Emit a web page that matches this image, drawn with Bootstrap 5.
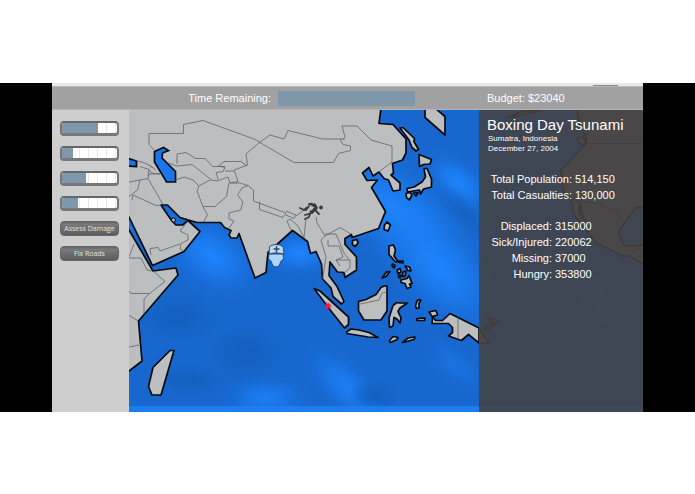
<!DOCTYPE html>
<html lang="en">
<head>
<meta charset="utf-8">
<meta name="viewport" content="width=device-width, initial-scale=1">
<title>Boxing Day Tsunami</title>
<link href="https://cdn.jsdelivr.net/npm/bootstrap@5.3.0/dist/css/bootstrap.min.css" rel="stylesheet">
<style>
body{font-family:"Liberation Sans",Arial,sans-serif;font-size:11px;line-height:16px;padding-top:83px;background:#fff}
.game{max-width:591px;background:#cecece}
.edge{height:4px;background:#e9e8e4;border-bottom:1px solid #bbb}
.topbar{background:#a1a1a1;height:23px;color:#fff;font-size:11px;border-bottom:1px solid #b4b4b4}
.time-label{padding-right:7px}
.time-cell{width:201px}
.time-track{width:137px;height:15px;background:#7e97aa;border-radius:0}
.info-col{width:164px;padding-left:8px}
.tools{width:77px;padding:11px 10px 0 8px;gap:10px}
.meter{height:15px;border:2px solid #777;border-top-color:#666;border-bottom-width:3px;border-radius:4px;background:#fff repeating-linear-gradient(90deg,transparent 0 8px,#e6e6e6 8px 9px)}
.meter .progress-bar{background:#7e97aa}
.tool{height:15px;line-height:13px;font-family:"Open Sans",sans-serif;font-size:7px;color:#e4e4e4;background:linear-gradient(#666,#7a7a7a 20%,#5c5c5c);border:1px solid #656565;border-radius:4px;white-space:nowrap}
.tool:hover{color:#fff;background:#555}
.stage{background:#1767ce}
.stage > *{grid-area:1/1}
.panel{background:rgba(69,66,64,.87);color:#fff;padding-top:5px}
.panel h1{font-size:15px;line-height:19px}
.place{font-size:8px;line-height:10px;padding-left:1px}
.totals,.needs{display:grid;column-gap:3px}
.totals{grid-template-columns:85px auto;margin-top:17px}
.needs{grid-template-columns:65px auto;margin-top:15px}
dl dt{font-weight:400;text-align:right;white-space:nowrap}
</style>
<script src="https://cdn.jsdelivr.net/npm/bootstrap@5.3.0/dist/js/bootstrap.bundle.min.js"></script>
</head>
<body>
<div class="bg-black">
<main class="game mx-auto">
  <div class="edge text-end pe-4 lh-1"><svg class="d-block ms-auto" width="27" height="3" viewBox="0 0 27 3" aria-hidden="true"><path d="M1 2.500H26" stroke="#8a8a88" stroke-width="1"/></svg></div>
  <header class="topbar d-flex align-items-center">
    <div class="d-flex align-items-center flex-grow-1">
      <span class="time-label flex-grow-1 text-end" id="time">Time Remaining:</span>
      <div class="time-cell"><div class="progress time-track" role="progressbar" aria-labelledby="time" aria-valuenow="100" aria-valuemin="0" aria-valuemax="100"></div></div>
    </div>
    <div class="info-col flex-shrink-0">Budget: $23040</div>
  </header>
  <div class="d-flex">
    <aside class="tools d-flex flex-column flex-shrink-0">
      <div class="progress meter" role="progressbar" aria-label="Food" aria-valuenow="65" aria-valuemin="0" aria-valuemax="100"><div class="progress-bar" style="width:65%"></div></div>
      <div class="progress meter" role="progressbar" aria-label="Water" aria-valuenow="20" aria-valuemin="0" aria-valuemax="100"><div class="progress-bar" style="width:20%"></div></div>
      <div class="progress meter" role="progressbar" aria-label="Medicine" aria-valuenow="44" aria-valuemin="0" aria-valuemax="100"><div class="progress-bar" style="width:44%"></div></div>
      <div class="progress meter" role="progressbar" aria-label="Shelter" aria-valuenow="29" aria-valuemin="0" aria-valuemax="100"><div class="progress-bar" style="width:29%"></div></div>
      <button type="button" class="btn tool p-0">Assess Damage</button>
      <button type="button" class="btn tool p-0">Fix Roads</button>
    </aside>
    <div class="stage d-grid flex-grow-1">
      <svg class="w-100 d-block" viewBox="129 110 514 302" role="img" aria-label="Map of Asia and the Indian Ocean">
        <defs>
          <radialGradient id="glow"><stop offset="0" stop-color="#1d84ff"/><stop offset=".35" stop-color="#1d82fb" stop-opacity=".7"/><stop offset=".7" stop-color="#1d80f8" stop-opacity=".2"/><stop offset="1" stop-color="#1d80f8" stop-opacity="0"/></radialGradient>
          <radialGradient id="deep"><stop offset="0" stop-color="#145fbe"/><stop offset="1" stop-color="#145fbe" stop-opacity="0"/></radialGradient>
        </defs>
        <rect x="129" y="110" width="514" height="302" fill="#1767ce"/>
        <g fill="url(#glow)">
          <ellipse cx="212" cy="256" rx="56" ry="38" transform="rotate(35 212 256)"/>
          <ellipse cx="395" cy="210" rx="95" ry="52" transform="rotate(35 395 210)"/>
          <ellipse cx="440" cy="268" rx="90" ry="48" transform="rotate(48 440 268)"/>
          <ellipse cx="458" cy="182" rx="44" ry="24" transform="rotate(40 458 182)"/>
          <ellipse cx="300" cy="253" rx="42" ry="24"/>
          <ellipse cx="266" cy="398" rx="46" ry="24" opacity=".8"/>
          <ellipse cx="345" cy="386" rx="56" ry="26" opacity=".8" transform="rotate(45 345 386)"/>
          <ellipse cx="148" cy="222" rx="34" ry="20"/>
          <ellipse cx="455" cy="365" rx="40" ry="20" opacity=".4" transform="rotate(40 455 365)"/>
          <ellipse cx="600" cy="300" rx="60" ry="24" opacity=".5" transform="rotate(45 600 300)"/>
        </g>
        <g fill="url(#deep)">
          <ellipse cx="178" cy="318" rx="45" ry="26"/><ellipse cx="190" cy="380" rx="40" ry="16"/>
          <ellipse cx="247" cy="352" rx="40" ry="30"/><ellipse cx="375" cy="395" rx="26" ry="16"/>
          <ellipse cx="462" cy="212" rx="36" ry="14" opacity=".7" transform="rotate(48 462 212)"/>
        </g>
        <rect x="129" y="406" width="514" height="6" fill="#1d84fb" opacity=".75"/>
        <g fill="#bcbec0" stroke="#050a10" stroke-width="1.7" stroke-linejoin="round">
          <path d="M127 108H381L379 123.500 393 124.500 406 139V153L402.500 160 392.500 163.500 393.500 173 391 175 400 183V190L393 191 388.500 180 384 178.500 379 172 373 176 369 167.500 362.500 173 367 180.500 377.500 180 371.500 187.500 385.500 211.500 378.500 228.500 352 237.500 351.500 234.500 345 238.500V244.500L356.500 257V270L345 277.500 344 272.500 337.500 272 330 262 329 275.500 337 286.500 344 301.500 341.500 304 333 296.500 331 288 322.500 279 321.500 264 316 251.500 310.500 253.500 307.500 241.500 292.500 230.500 268 252.500 266 272.500 255 278 239 233.500 237 238H231L229 235 231 230.500 224.500 227.500 220.500 222.500H197L180 217.500 167.500 205H161L166 212.500 172 221 176 225H182.500L188 220.500 200 231.500 184 251.500 152.500 265.500 129 217 125 216V228L129 230 153 271 176 268 178 275 138.500 321 142 361 126 373.500H120V108Z"/>
          <path d="M170 350.500H174L161 395H152L148.500 386.500 153 367.500Z"/>
          <path d="M314 288.500 320 291 348.500 317V324.500L344.500 328 331 311Z"/>
          <path d="M346.500 332 351 329 359 330 369 332.500 378 337.500 368 337 347 333.500Z"/>
          <path d="M384 286H387V311L381 320H364L358.500 311V301.500L366 299.500 376 294.500 381 287.500Z"/>
          <path d="M399 303H407.500L400 308 398 311.500 401 318 400 323 397 319 394 317.500 393 326 389.500 327.500 389 318 393 305.500 397 302.500Z"/>
          <path d="M417 301 419 299.500 421 300.500 419 303V308L416.500 308.500 415.500 306Z"/>
          <path d="M417 318.500 425 318 424.500 320.500H417Z"/>
          <path d="M429 312 436 310.500 437.500 315 432.500 316.500 435.500 320.500H442.500L450 313.500 479 328V343L468.500 334.500 461.500 340.500 448.500 336 452.500 332.500V327.500L448.500 323.500H432L432.500 317Z"/>
          <path d="M389.500 340.500 393 336.500 398 337.500 397 339.500 390.500 342.500ZM402.500 342.500 408 338 415 337 414 339.500 403 342.500Z"/>
          <path d="M389 246 393.500 245 395.500 250 394 256 397.500 261H403V263L395 261.500 389 254.500Z"/>
          <path d="M382 278 386.500 272 390 271.500 386 276.500ZM392.500 264 395 265.500 394 268 392 266Z"/>
          <path d="M397 270 400 268.500 401 272 398 273.500ZM403 272 406 271 405 276 402.500 276.500ZM405 266 409.500 267 411 271 408 270.500ZM399 275 401 275.500 400 278 398.500 277Z"/>
          <path d="M401 280 407 278.500 409 275.500 412 283.500 409.500 284 411 287 407 288.500 405 283.500 401 282.500Z"/>
          <path d="M387 222 390.500 225 388 231 384 229.500 384.500 225Z"/>
          <path d="M352.500 240.500 357 239.500 358 243 355 246.500 352.500 244.500Z"/>
          <path d="M400 128 403 127.500 414.500 138.500 414 141.500 418.500 149.500 416 151 412 147.500 409 140Z"/>
          <path d="M419 154.500 431.500 159.500 430 164 423.500 164.500 419.500 166.500Z"/>
          <path d="M424 168.500H427L431.500 179V187L423.500 189 420.500 194 419.500 190 413.500 191 407.500 192 407 188.500 414 187 422 182 425.500 177Z"/>
          <path d="M406 193.500 410 192.500 412 195 409.500 200 406.500 197.500ZM413.500 193 418 192.500 416 196Z"/>
          <path d="M425 108V117.500L445 135V116.500L435 108Z"/>
        </g>
        <g fill="#1b75ea" stroke="#050a10" stroke-width="1.700">
          <path d="M154.500 151.500 163.500 147.500 168.500 150.500 162.500 153 162 158 175.500 171.500V182H166.500L154.500 162Z"/>
          <path d="M127 158 136.500 161V166.500L127 166Z"/>
        </g>
        <circle cx="173.500" cy="220" r="2" fill="#bcbec0" stroke="#050a10"/>
        <g fill="none" stroke="#55585b" stroke-width=".7">
          <path d="M154.500 150.500 149 144.500V133.500H183.500V124.500L203 120.500 254 139 294 162.500H333.500L338.500 153.500 350.500 150.500V146L343 144.500 340 139H323L288 130.500 284 139 270 135 260 142 246 154 247.500 165 234 170"/>
          <path d="M343 139 345 137 342 126H357L371 140 392 146V162L380 171M340 139H345"/>
          <path d="M177 164V154L186 152.500 195.500 158.500 205 158.500 212.500 166.500H225M247 166 241 161.500H224L218.500 166 225 167.500 223 171.500 216 172.500 218.500 180.500 228 177 230 183 238 181.500 234.500 171 225 171"/>
          <path d="M168 163 177 166 192 164.500 211 179.500 199 186 193 180 184.500 177 175 180M211 180 218 181"/>
          <path d="M199 186 197 191 203 206.500H215L226.500 196.500 229 183M203 207 207.500 215 203.500 222"/>
          <path d="M230 183H240L248 185.500 253.500 190V201L286 213 283 217.500 259.500 209.500V202M286 211 296 215 294 218.500 286 215M296 216 304 210"/>
          <path d="M248 185.500 242 188 237.500 195 243 202 240.500 210 229 213V219L234 221 229 228"/>
          <path d="M136.500 161 142 162 149 165 156 170M140 166.500 149 169.500 151.500 173 160 174M149 165 153 168M149 174H160M149 174 148 178.500 163 204.500M129 182 148 178.500M149 170 148 176M140 180 137.500 190 129 196.500M133 195 156 205.500 161 205M133 195 132 200"/>
          <path d="M188 221 180 231 188 235V240L181 243.500 180 249 184 251M180 244 160 251 158 247.500 150 248.500 151 255"/>
          <path d="M129 258H141L147 270 153 271 165 281.500 149.500 293.500H131L129 291M134 244 129 257M149.500 293.500 144 299V314M138.500 321 129 315.500M129 347 139 345"/>
          <path d="M291 230 287 221 290 219 298 226 304 238M304 238 306 218M316 217 317 223 325 236 321 240 326 257 322.500 279M325 236 340 227.500 351 234M325 234 336 234 344 253 349 259.500M328 240 328 246H339L343 257 336 260 340 266M336 260H350V268L344 273"/>
          <path d="M360 304 379 300 382 293 387 292M458 317V338.500"/>
        </g>
        <g fill="none" stroke="#393b3d" stroke-width="1.800" stroke-linecap="round" stroke-linejoin="round">
          <path d="M300 208 304 210 307 207.500M309 204 315 204.500 317 208 312 213 305 215M315 210 319 214M311 211 309 217 305 219M309 206 306 210"/>
          <path d="M311 204 316 207 312 212" stroke-width="2.500"/>
          <circle cx="321" cy="207.500" r="1" fill="#393b3d"/>
        </g>
        <g stroke="#27466a" stroke-width=".9" stroke-linejoin="round">
          <path fill="#aed4fb" d="M269 254H283L283.500 259 281 261 279 266Q276 268 273 266L271 261 268.500 259Z"/>
          <path fill="#bddaf0" d="M269 254 269.500 246.500Q276 242.500 283 246.500L284 254Q276 251.500 269 254Z"/>
          <path stroke-width="1.400" d="M273.500 249H279.500M276.500 246V252"/>
        </g>
        <circle cx="328" cy="306" r="2.500" fill="#f21a42"/>
        <circle cx="328" cy="306" r="4" fill="#f21a42" opacity=".25"/>
        <g fill="#666d74" stroke="#151515" stroke-width="1.700" stroke-linejoin="round">
          <path d="M479 328 489 343.500 479 343M483.500 329 490 324 494 325 486 330.500ZM488 319 491 317.500 499 322 496 324Z"/>
          <path d="M577 108 580 127 586 136V143.500L561 170 563 190 571 200 574 215 586 230 596 243 623 256 629 256 647 266V108Z"/>
          <path d="M577 138 583 137 586 142 583 145 578 142ZM508 118 520 112 550 108 530 113Z"/>
          <path fill="#1b62b8" d="M636 207 618 232 624 246H641L647 240V207ZM580 204 583 216 585 221 579 213Z"/>
          <path fill="none" stroke-width=".8" d="M586 143.500H647M574 200 603 205 609 210 616 209 621 220M629 256 637 249 643 250M637 256 643 258"/>
        </g>
      </svg>
      <section class="panel info-col justify-self-end ms-auto">
        <h1 class="fw-normal mb-0 text-nowrap">Boxing Day Tsunami</h1>
        <div class="place">Sumatra, Indonesia<br>December 27, 2004</div>
        <dl class="totals mb-0">
          <dt>Total Population:</dt><dd class="mb-0">514,150</dd>
          <dt>Total Casualties:</dt><dd class="mb-0">130,000</dd>
        </dl>
        <dl class="needs mb-0">
          <dt>Displaced:</dt><dd class="mb-0">315000</dd>
          <dt>Sick/Injured:</dt><dd class="mb-0">220062</dd>
          <dt>Missing:</dt><dd class="mb-0">37000</dd>
          <dt>Hungry:</dt><dd class="mb-0">353800</dd>
        </dl>
      </section>
    </div>
  </div>
</main>
</div>
</body>
</html>
